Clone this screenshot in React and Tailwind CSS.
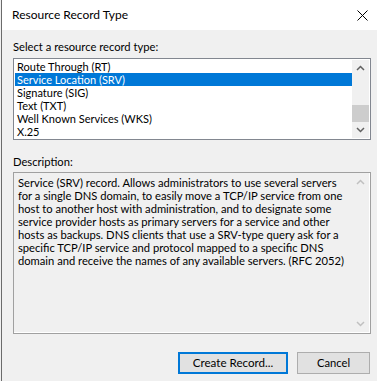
import React from "react";

const items = [
  "Route Through (RT)",
  "Service Location (SRV)",
  "Signature (SIG)",
  "Text (TXT)",
  "Well Known Services (WKS)",
  "X.25",
];

const desc = [
  "Service (SRV) record. Allows administrators to use several servers",
  "for a single DNS domain, to easily move a TCP/IP service from one",
  "host to another host with administration, and to designate some",
  "service provider hosts as primary servers for a service and other",
  "hosts as backups. DNS clients that use a SRV-type query ask for a",
  "specific TCP/IP service and protocol mapped to a specific DNS",
  "domain and receive the names of any available servers. (RFC 2052)",
];

function Chevron({ up, color }) {
  return (
    <svg width="9" height="6" viewBox="0 0 9 6">
      <path
        d={up ? "M1 5 L4.5 1.5 L8 5" : "M1 1 L4.5 4.5 L8 1"}
        fill="none"
        stroke={color}
        strokeWidth="1.5"
      />
    </svg>
  );
}

export default function App() {
  return (
    <div className="w-[377px] h-[381px] bg-[#f0f0f0] overflow-hidden flex font-['Lato','Noto_Sans',sans-serif]">
      <div className="ml-px w-[376px] h-full border-l border-[#6b6b6b] flex flex-col">
        {/* title bar */}
        <div className="h-[30px] bg-white flex items-center justify-between pl-[10px] pr-[9px]">
          <span className="text-[12px] text-black leading-[16px]">Resource Record Type</span>
          <svg width="11" height="11" viewBox="0 0 11 11">
            <path d="M0.5 0.5 L10.5 10.5 M10.5 0.5 L0.5 10.5" stroke="#000" strokeWidth="1" />
          </svg>
        </div>
        <div className="flex-1 pl-[11px] pr-[6px] pt-[9px] flex flex-col">
          <div className="text-[11.2px] leading-[16px] text-black">Select a resource record type:</div>
          <div className="mt-[3px] h-[82px] border border-[#828790] bg-white flex p-px">
            <div className="flex-1 flex flex-col">
              {items.map((t, i) => (
                <div
                  key={t}
                  className={
                    "h-[13px] leading-[13px] text-[11px] pl-[2px] whitespace-nowrap " +
                    (i === 1 ? "bg-[#0078d7] text-white" : "text-black")
                  }
                >
                  {t}
                </div>
              ))}
            </div>
            <div className="w-[17px] bg-[#f0f0f0] flex flex-col">
              <div className="h-[17px] flex items-center justify-center">
                <Chevron up color="#606060" />
              </div>
              <div className="flex-1 flex flex-col pt-[28px]">
                <div className="h-[17px] bg-[#cdcdcd]" />
              </div>
              <div className="h-[17px] flex items-center justify-center">
                <Chevron color="#606060" />
              </div>
            </div>
          </div>
          <div className="mt-[14px] text-[11.2px] leading-[16px] text-black">Description:</div>
          <div className="mt-[2px] h-[162px] border border-[#a0a0a0] flex">
            <div className="flex-1 flex border-r border-b border-white">
              <div className="flex-1 pl-[4px] pt-[3px] text-[11.2px] leading-[13px] text-black">
                {desc.map((l) => (
                  <div key={l} className="whitespace-nowrap">{l}</div>
                ))}
              </div>
              <div className="w-[17px] flex flex-col justify-between bg-[#f0f0f0]">
                <div className="h-[17px] flex items-center justify-center">
                  <Chevron up color="#c0c0c0" />
                </div>
                <div className="h-[17px] flex items-center justify-center">
                  <Chevron color="#c0c0c0" />
                </div>
              </div>
            </div>
          </div>
          <div className="mt-[18px] flex justify-end gap-[9px] pr-[1px]">
            <button className="w-[110px] h-[22px] border-2 border-[#0078d7] bg-[#e1e1e1] text-[11.6px] text-black leading-none">
              Create Record...
            </button>
            <button className="w-[73px] h-[22px] border border-[#adadad] bg-[#e1e1e1] text-[11.2px] text-black leading-none">
              Cancel
            </button>
          </div>
        </div>
      </div>
    </div>
  );
}
